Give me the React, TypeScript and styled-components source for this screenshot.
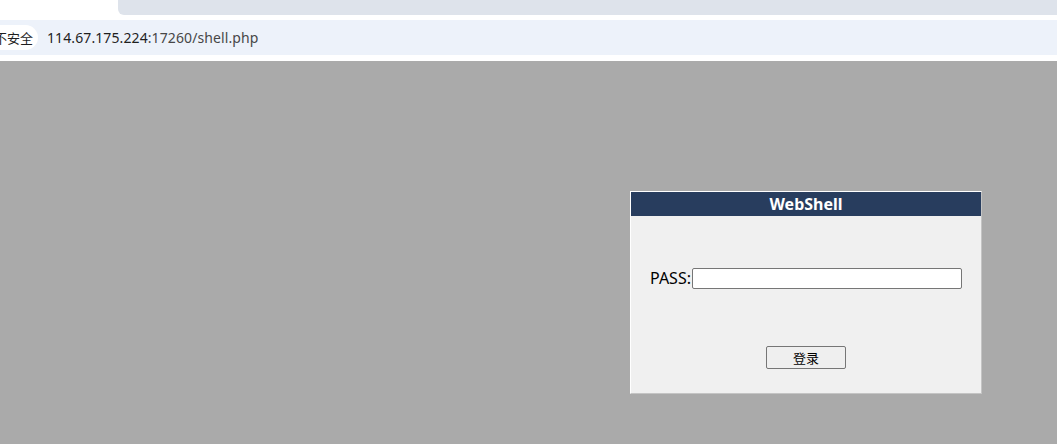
import React from "react";
import styled, { createGlobalStyle } from "styled-components";

const Global = createGlobalStyle`
  html, body { margin: 0; padding: 0; }
  body { width: 1057px; height: 444px; overflow: hidden; background: #aaaaaa; font-family: "Noto Sans", "Noto Sans CJK SC", sans-serif; }
`;

const Chrome = styled.div`
  background: #ffffff;
  height: 61px;
  display: flex;
  flex-direction: column;
`;

const TabStrip = styled.div`
  height: 15px;
  display: flex;
`;

const TabGap = styled.div`
  width: 118px;
`;

const TabFill = styled.div`
  flex: 1;
  background: #dee3eb;
  border-bottom-left-radius: 6px;
`;

const AddressBar = styled.div`
  margin-top: 5px;
  height: 35px;
  background: #edf2fa;
  display: flex;
  align-items: center;
`;

const Chip = styled.div`
  height: 25px;
  width: 38px;
  background: #ffffff;
  border-radius: 0 13px 13px 0;
  display: flex;
  align-items: center;
  justify-content: flex-end;
  padding-right: 5px;
  box-sizing: border-box;
  overflow: hidden;
  font-size: 13px;
  color: #1f1f1f;
  white-space: nowrap;
  font-family: "Noto Sans CJK SC", sans-serif;
`;

const Url = styled.div`
  margin-left: 9px;
  font-size: 14px;
  font-family: "Noto Sans", "Liberation Sans", sans-serif;
  color: #1f1f1f;
  letter-spacing: 0.1px;
`;

const UrlRest = styled.span`
  color: #474747;
`;

const Page = styled.div`
  height: 383px;
  background: #aaaaaa;
  padding-top: 130px;
  padding-left: 630px;
  box-sizing: border-box;
`;

const Panel = styled.div`
  width: 352px;
  height: 203px;
  box-sizing: border-box;
  border-top: 1px solid #ffffff;
  border-left: 1px solid #ffffff;
  border-right: 1px solid #c4c4c4;
  border-bottom: 1px solid #c4c4c4;
  background: #f0f0f0;
  display: flex;
  flex-direction: column;
`;

const Header = styled.div`
  height: 24px;
  background: #283d5e;
  color: #ffffff;
  font-weight: bold;
  font-size: 16px;
  display: flex;
  align-items: center;
  justify-content: center;
`;

const Row = styled.div`
  margin-top: 51px;
  padding-left: 19px;
  display: flex;
  align-items: center;
  font-size: 16px;
  color: #000;
`;

const Input = styled.input`
  width: 270px;
  height: 21px;
  box-sizing: border-box;
  border: 1px solid #767676;
  border-radius: 2px;
  background: #fff;
  margin: 0 0 0 1px;
  padding: 0 2px;
`;

const ButtonRow = styled.div`
  margin-top: 57px;
  display: flex;
  justify-content: center;
`;

const Button = styled.button`
  width: 80px;
  height: 23px;
  box-sizing: border-box;
  border: 1px solid #767676;
  border-radius: 2px;
  background: #efefef;
  font-size: 13px;
  font-family: "Noto Sans CJK SC", sans-serif;
  color: #000;
  padding: 0;
  display: flex;
  align-items: center;
  justify-content: center;
`;

export default function App() {
  return (
    <>
      <Global />
      <Chrome>
        <TabStrip>
          <TabGap />
          <TabFill />
        </TabStrip>
        <AddressBar>
          <Chip>不安全</Chip>
          <Url>
            114.67.175.224<UrlRest>:17260/shell.php</UrlRest>
          </Url>
        </AddressBar>
      </Chrome>
      <Page>
        <Panel>
          <Header>WebShell</Header>
          <Row>
            PASS:<Input type="password" />
          </Row>
          <ButtonRow>
            <Button>登录</Button>
          </ButtonRow>
        </Panel>
      </Page>
    </>
  );
}
